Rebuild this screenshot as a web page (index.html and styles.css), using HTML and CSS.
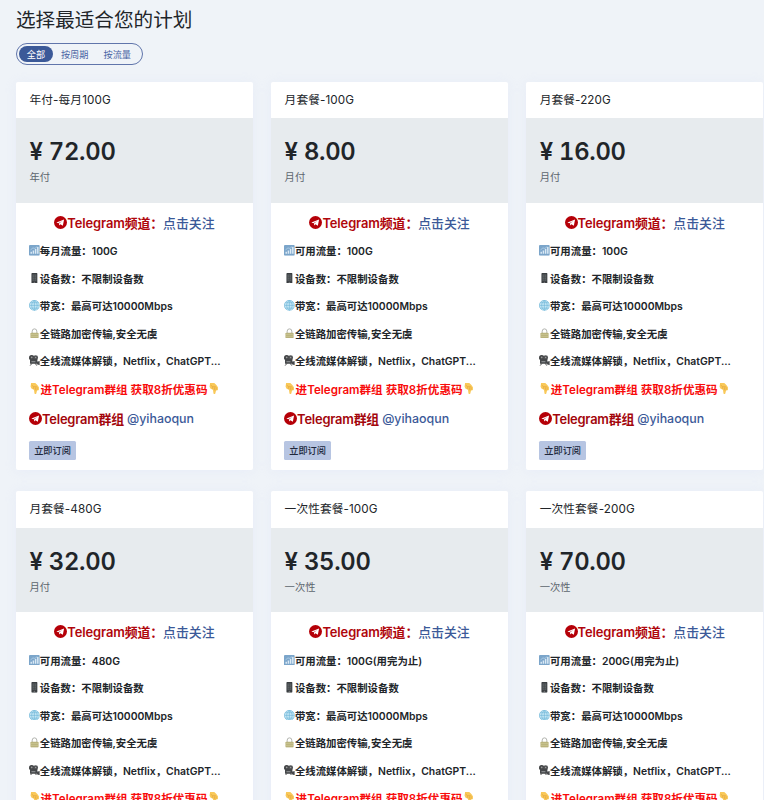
FILE: index.html
```html
<!DOCTYPE html>
<html lang="zh-CN">
<head>
<meta charset="utf-8">
<title>选择最适合您的计划</title>
<link rel="stylesheet" href="styles.css">
</head>
<body>
<svg class="sprite" aria-hidden="true">
  <symbol id="telegram" viewBox="0 0 24 24"><circle cx="12" cy="12" r="12" fill="#b50008"/><path d="M4.500 12.200 18.600 6.400 16.300 18.200 11.800 15.200 9.600 17.400 9.200 13.800 15.200 9.200 7.900 13.500Z" fill="#fff"/></symbol>
  <symbol id="chart" viewBox="0 0 22 22"><rect width="22" height="22" rx="2" fill="#7ba5ca"/><path d="M3 18v-4h3v4zM7.500 18v-7h3v7zM12 18V8h3v10zM16.500 18V4h3v14z" fill="#dceaf5"/><path d="M3 10 8 6l4 1 5-4" fill="none" stroke="#b9d6ec" stroke-width="1.500"/></symbol>
  <symbol id="phone" viewBox="0 0 22 22"><rect x="5" y="0" width="12" height="22" rx="1.500" fill="#3a3e41"/><path d="M7 3h8v13H7z" fill="#62676b"/><path d="M7 6h8M7 9.500h8M7 13h8M11 3v13" stroke="#3d4144"/><path d="M9.500 19h3" stroke="#aaa" stroke-width="1.200"/></symbol>
  <symbol id="globe" viewBox="0 0 22 22"><circle cx="11" cy="11" r="10.300" fill="#c4e6f5" stroke="#6bb5d8" stroke-width="1.300"/><path d="M1 11h20M3 5.500h16M3 16.500h16M11 1v20M11 1C3.500 6 3.500 16 11 21M11 1c7.500 5 7.500 15 0 20" fill="none" stroke="#6bb5d8" stroke-width="1.200"/></symbol>
  <symbol id="lock" viewBox="0 0 22 22"><path d="M6.500 11V6.500a4.700 4.700 0 0 1 9.400 0V11" fill="none" stroke="#b0b3ad" stroke-width="2"/><rect x="3" y="9.500" width="16.500" height="12" rx="1.500" fill="#b9b27c"/><path d="M3.500 13h15.500M3.500 17h15.500" stroke="#d2cc9b" stroke-width="1.300"/></symbol>
  <symbol id="camera" viewBox="0 0 22 22"><circle cx="5.500" cy="5.500" r="5.500" fill="#414345"/><circle cx="13.500" cy="5.500" r="5" fill="#505254"/><path d="M2 8h15v10H2zM16 14l6-2v9l-6-2z" fill="#45474a"/><path d="m7 16-5 6M12 16l4 6" stroke="#555" stroke-width="2"/><circle cx="5.500" cy="5" r="1.800" fill="#999"/><circle cx="13.500" cy="5" r="1.500" fill="#999"/><path d="M5 12h8v3H5z" fill="#85888a"/></symbol>
  <symbol id="point-down" viewBox="0 0 22 22"><path d="M4 0h8l4 4 3 4v5q-1.500 2.500-3.500 1L14 20q-1.500 3-3.500 0L9.500 13 5 11 3 7z" fill="#f9c95a"/><path d="M8 7l1.500 5M12 8l1 6M15.500 8v5M5 4l4 3h6" fill="none" stroke="#dfa03a" stroke-width="1.100"/></symbol>
</svg>
<main class="page">
  <h1 class="title">选择最适合您的计划</h1>
  <nav class="filter">
    <a class="filter-item active">全部</a>
    <a class="filter-item">按周期</a>
    <a class="filter-item">按流量</a>
  </nav>
  <section class="plans" id="plans"></section>
</main>
<script src="plans.js"></script>
</body>
</html>
```
FILE: styles.css
```css
* { box-sizing: border-box; }
html { height: 100%; overflow: hidden; }
body {
  margin: 0;
  height: 100%;
  overflow: hidden;
  background: #eff3f8;
  color: #212529;
  font-family: Inter, "Noto Sans CJK SC", sans-serif;
}
.sprite { display: none; }
.page { width: 764px; padding: 6px 0 0 16px; }
.title { margin: 0; font-size: 19.600px; font-weight: 400; line-height: 28px; }
.filter {
  display: flex;
  width: 126.500px;
  height: 22.500px;
  margin-top: 8.500px;
  padding: 2px;
  border: 1px solid #6075ab;
  border-radius: 12px;
}
.filter-item {
  padding: 0 7.500px;
  font-size: 9.200px;
  line-height: 17px;
  white-space: nowrap;
  color: #4a65a4;
}
.filter-item.active { width: 34px; padding: 0; margin-right: .4px; text-align: center; color: #fff; background: #3b5998; border-radius: 9px; }
.plans {
  display: grid;
  grid-template-columns: repeat(3, 237px);
  column-gap: 18.100px;
  row-gap: 21px;
  margin-top: 16.500px;
}
.card { height: 388.500px; background: #fff; border-radius: 2px; box-shadow: 0 1px 12px rgba(215, 223, 248, .3); }
.card-name { height: 36.500px; padding-left: 13.500px; font-size: 11.700px; line-height: 37.500px; letter-spacing: .1px; }
.card-price { height: 84.500px; padding: 17px 13.500px 0; background: #e7ebee; }
.price { font-size: 23.800px; font-weight: 600; line-height: 34px; letter-spacing: -.25px; font-variant-numeric: tabular-nums; }
.period { font-size: 10.300px; line-height: 17px; color: #5d656d; }
.card-body { padding: 5px 13px 0; font-weight: 600; }
.row { display: flex; align-items: center; height: 27.500px; font-size: 10.400px; white-space: pre; }
.icon { flex: none; width: 10.800px; height: 10.800px; }
.channel { justify-content: center; height: 29.300px; font-size: 12.900px; color: #b0060c; }
.channel span, .group span { letter-spacing: -.1px; }
.channel .icon, .group .icon { width: 13px; height: 13px; }
.link { color: #3b5998; font-weight: 500; }
.group span { letter-spacing: -.2px; }
.group .link { font-size: 12.400px; }
.promo { height: 28.500px; font-size: 11.600px; color: #f80b0b; }
.promo .icon { width: 11.500px; height: 11.500px; }
.group { height: 31px; font-size: 12.900px; color: #a3060c; }
.subscribe {
  display: block;
  width: 47px;
  height: 19px;
  margin-top: 6.800px;
  padding: 0;
  border: 0;
  border-radius: 1.500px;
  background: #b7c5e2;
  color: #20283c;
  font: 500 9.200px/19px Inter, "Noto Sans CJK SC", sans-serif;
}
```
FILE: plans.js
```js
const plans = [
  ["年付-每月100G", "72.00", "年付", "每月流量：100G"],
  ["月套餐-100G", "8.00", "月付", "可用流量：100G"],
  ["月套餐-220G", "16.00", "月付", "可用流量：100G"],
  ["月套餐-480G", "32.00", "月付", "可用流量：480G"],
  ["一次性套餐-100G", "35.00", "一次性", "可用流量：100G(用完为止)"],
  ["一次性套餐-200G", "70.00", "一次性", "可用流量：200G(用完为止)"]
];
const icon = (id) => `<svg class="icon"><use href="#${id}"/></svg>`;
const row = (id, text) => `<div class="row">${icon(id)}<span>${text}</span></div>`;

document.getElementById("plans").innerHTML = plans.map(([name, price, period, traffic]) => `
  <article class="card">
    <div class="card-name">${name}</div>
    <div class="card-price"><div class="price">¥ ${price}</div><div class="period">${period}</div></div>
    <div class="card-body">
      <div class="row channel">${icon("telegram")}<span>Telegram频道：</span><a class="link">点击关注</a></div>
      ${row("chart", traffic)}
      ${row("phone", "设备数：不限制设备数")}
      ${row("globe", "带宽：最高可达10000Mbps")}
      ${row("lock", "全链路加密传输,安全无虞")}
      ${row("camera", "全线流媒体解锁，Netflix，ChatGPT...")}
      <div class="row promo">${icon("point-down")}<span>进Telegram群组 获取8折优惠码</span>${icon("point-down")}</div>
      <div class="row group">${icon("telegram")}<span>Telegram群组 </span><a class="link">@yihaoqun</a></div>
      <button class="subscribe">立即订阅</button>
    </div>
  </article>`).join("");
```
